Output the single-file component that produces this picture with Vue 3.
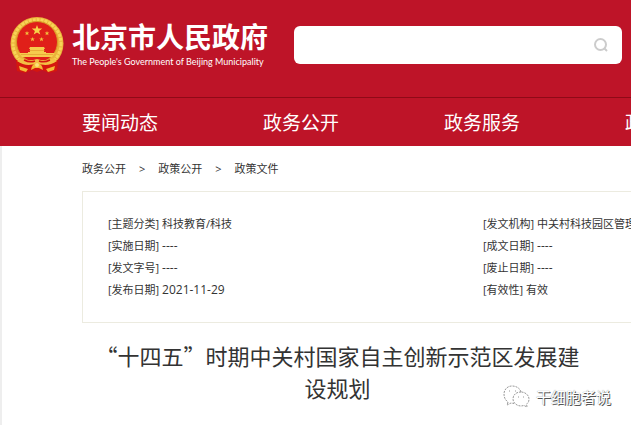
<script setup>
import { ref } from 'vue'

const keyword = ref('')

const nav = ['要闻动态', '政务公开', '政务服务', '政民互动']
const crumbs = ['政务公开', '政策公开', '政策文件']

const info = [
  { label: '主题分类', value: '科技教育/科技' },
  { label: '发文机构', value: '中关村科技园区管理委员会' },
  { label: '实施日期', value: '----', date: true },
  { label: '成文日期', value: '----', date: true },
  { label: '发文字号', value: '----', date: true },
  { label: '废止日期', value: '----', date: true },
  { label: '发布日期', value: '2021-11-29', date: true },
  { label: '有效性', value: '有效' }
]
</script>

<template>
  <div class="page">
    <header class="header">
      <div class="top">
        <a class="logo" href="#">
          <svg class="emblem" viewBox="0 0 54 56" aria-hidden="true">
            <circle cx="27" cy="26.500" r="26.500" fill="#eab23a" />
            <circle cx="27" cy="26.500" r="24" fill="none" stroke="#f7d457" stroke-width="3" stroke-dasharray="3 1" />
            <circle cx="27" cy="25" r="20.500" fill="#e01f19" stroke="#d99a27" stroke-width="1" />
            <path d="M27 8l1.300 3.600h3.900l-3.100 2.300 1.200 3.700-3.300-2.200-3.300 2.200 1.200-3.700-3.100-2.300h3.900z" fill="#f7d348" />
            <g fill="#f2bf3d">
              <path d="M17 14l.6 1.500h1.700l-1.300 1 .5 1.700-1.500-1-1.500 1 .5-1.700-1.300-1h1.700z" />
              <path d="M37 14l.6 1.500h1.700l-1.300 1 .5 1.700-1.500-1-1.500 1 .5-1.700-1.300-1h1.700z" />
              <path d="M22.500 20l.6 1.500h1.700l-1.300 1 .5 1.700-1.500-1-1.500 1 .5-1.700-1.300-1h1.700z" />
              <path d="M31.500 20l.6 1.500h1.700l-1.300 1 .5 1.700-1.500-1-1.500 1 .5-1.700-1.300-1h1.700z" />
            </g>
            <path d="M20 30h14l1 2h-1v3h2v1h9l-3 4h-30l-3-4h9v-1h2v-3h-1z" fill="#f6cb4d" />
            <path d="M19 33.500h16M11 37.500h32" stroke="#dd8b25" stroke-width="0.500" />
            <path d="M6 43L15 44 27 48 39 44 48 43 47 54 39 56 32 53 27 55 22 53 15 56 7 54Z" fill="#d5170f" />
            <path d="M10 41Q18 45 27 42Q36 45 44 41L47 44Q37 51 27 46Q17 51 7 44Z" fill="#f3c044" />
            <path d="M14 43Q20 46 25 44M40 43Q34 46 29 44" fill="none" stroke="#d5170f" stroke-width="1.500" />
            <path d="M9 49L18 52 16 55 10 53ZM45 49L36 52 38 55 44 53ZM21 53Q22 46 27 46Q32 46 33 53L29 51H25Z" fill="#f4b937" />
            <circle cx="27" cy="48" r="2" fill="#fbe27b" />
          </svg>
          <span class="logo-text">
            <strong class="logo-name">北京市人民政府</strong>
            <span class="logo-en">The People's Government of Beijing Municipality</span>
          </span>
        </a>
        <form class="search" @submit.prevent>
          <input v-model="keyword" class="search-input" type="text" aria-label="搜索">
          <button class="search-btn" type="submit" aria-label="搜索">
            <svg viewBox="0 0 14 14" width="14" height="14">
              <circle cx="6.500" cy="6.500" r="5.500" />
              <path d="M10 10L13 13" />
            </svg>
          </button>
        </form>
      </div>
      <nav class="nav">
        <a v-for="item in nav" :key="item" href="#">{{ item }}</a>
      </nav>
    </header>

    <main class="main">
      <nav class="crumbs">
        <template v-for="(c, i) in crumbs" :key="c">
          <span v-if="i > 0" class="sep">&gt;</span>
          <a href="#">{{ c }}</a>
        </template>
      </nav>

      <ul class="info">
        <li v-for="row in info" :key="row.label">
          [{{ row.label }}] <span :class="{ date: row.date }">{{ row.value }}</span>
        </li>
      </ul>

      <h1 class="title">“十四五”时期中关村国家自主创新示范区发展建设规划</h1>
    </main>

    <div class="watermark">
      <svg viewBox="0 0 27 23" width="27" height="23" aria-hidden="true">
        <path d="M5 17l-1 3 4-2 3 .5M18 7C17 3 13 1 9 1 4 1 1 5 1 9c0 3 1 6 4 8" />
        <path d="M18 7c-5 0-8 3-8 7s4 7 8 7l3-.5 3 1.500-.5-3c2-1 2.500-3 2.500-5 0-4-4-7-8-7z" />
        <path d="M6 6h1M12 6h1M15 12h1M20 12h1" />
      </svg>
      <span>干细胞者说</span>
    </div>
  </div>
</template>

<style>
body {
  margin: 0;
  background: #fff;
}
</style>

<style scoped>
.page {
  position: relative;
  min-height: 100vh;
  overflow: hidden;
  display: flex;
  flex-direction: column;
  font-family: "Open Sans", "Noto Sans CJK SC", sans-serif;
  color: #333;
}

a {
  color: inherit;
  text-decoration: none;
}

.header {
  background: #be1428;
  color: #fff;
}

.top {
  display: flex;
  align-items: center;
  gap: 26px;
  height: 98px;
  padding: 0 9px 8px 10px;
  box-sizing: border-box;
  border-bottom: 1px solid #8f0a17;
}

.logo {
  display: flex;
  align-items: center;
  gap: 8px;
  flex: none;
}

.emblem {
  width: 54px;
  height: 56px;
}

.logo-text {
  display: flex;
  flex-direction: column;
  white-space: nowrap;
}

.logo-name {
  font-size: 28px;
  line-height: 34px;
  font-weight: 700;
}

.logo-en {
  font-family: Lato, sans-serif;
  font-size: 9px;
  line-height: 16px;
}

.search {
  display: flex;
  flex: 1;
  height: 38px;
  background: #fff;
  border-radius: 6px;
}

.search-input {
  flex: 1;
  min-width: 0;
  padding: 0 12px;
  border: 0;
  background: none;
  outline: none;
  font-size: 14px;
}

.search-btn {
  display: flex;
  align-items: center;
  padding: 0 14px;
  border: 0;
  background: none;
}

.search-btn svg {
  fill: none;
  stroke: #ccc;
  stroke-width: 2;
}

/* menu runs past the right edge on narrow windows */
.nav {
  display: flex;
  padding: 2px 0 0 82px;
  overflow: hidden;
  font-size: 19px;
  line-height: 46px;
  white-space: nowrap;
}

.nav a {
  flex: 0 0 181px;
}

.main {
  flex: 1;
  padding-left: 80px;
  border-left: 2px solid #eee;
}

.crumbs {
  display: flex;
  padding: 12px 0;
  font-size: 11px;
  line-height: 21px;
}

.sep {
  padding: 0 13px;
}

.info {
  display: grid;
  grid-template-columns: 375px 1fr;
  margin: 0;
  padding: 21px 0 21px 25px;
  border: 1px solid #ecebe0;
  border-right: 0;
  list-style: none;
  font-size: 11px;
  line-height: 22px;
  white-space: nowrap;
}

.info li {
  min-width: 0;
  height: 22px;
}

.date {
  font-size: 12px;
}

.title {
  margin: 16px 0 0;
  padding: 0 46px 0 8px;
  font-size: 22px;
  line-height: 32px;
  font-weight: 400;
  font-family: "Noto Sans CJK SC", sans-serif;
  text-align: center;
}

.watermark {
  position: absolute;
  right: 20px;
  bottom: 17px;
  display: flex;
  align-items: center;
  gap: 6px;
  color: #fff;
  font-size: 15px;
  line-height: 22px;
  text-shadow: 1px 1px 0 #555, 0 0 1px #777;
}

.watermark svg {
  fill: #fff;
  stroke: #999;
  stroke-width: 1;
  stroke-dasharray: 2 1;
}
</style>
